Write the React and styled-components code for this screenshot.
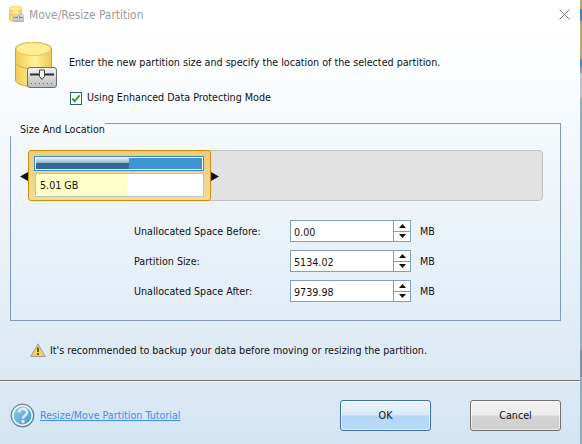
import React from "react";
import styled, { createGlobalStyle } from "styled-components";

const Global = createGlobalStyle`
  html, body { margin: 0; padding: 0; background: #fff; }
  body { font-family: "DejaVu Sans Condensed", "DejaVu Sans", sans-serif; font-stretch: condensed; font-size: 10.65px; color: #111; }
  * { box-sizing: border-box; }
`;
const Win = styled.div`
  width: 582px; height: 444px; display: flex; overflow: hidden;
`;
const Dialog = styled.div`
  width: 580px; height: 444px; display: flex; flex-direction: column;
  background: linear-gradient(#ffffff 0, #ffffff 30px, #d4e5f2 100%);
`;
const Strip = styled.div`
  width: 2px; height: 444px;
  background: linear-gradient(#b8a76e 0, #b8a76e 9px, #3a86c0 9px, #3a86c0 20px, #b8a76e 22px, #b8a76e 58px, #3a86c0 60px, #3a86c0 65px, #8a9aa8 68px, #8a9aa8 73px, #c0c4c8 73px, #c0c4c8 98px, #8fb0c0 98px, #8fb0c0 350px, #8090a8 350px, #8090a8 377px, #8fb0c0 377px);
`;
const TitleBar = styled.div`
  height: 30px; padding: 6px 10px 0 9px; display: flex; align-items: flex-start; gap: 5px;
`;
const Title = styled.div`
  font-size: 11.9px; color: #9a9a9a; line-height: 18px;
`;
const Close = styled.svg`margin-left: auto; margin-top: 3px; margin-right: 0;`;
const Header = styled.div`
  display: flex; padding: 12px 0 0 15px; height: 93px;
`;
const HeaderText = styled.div`
  display: flex; flex-direction: column; padding: 14px 0 0 12px; gap: 21px; line-height: 14px;
`;
const Check = styled.label`display: flex; align-items: center; gap: 5px; line-height: 14px; margin-left: 1px;`;
const Box = styled.span`
  width: 12px; height: 13px; border: 1px solid #2c5f86; background: #fff; display: flex; align-items: center; justify-content: center;
`;
const Group = styled.section`
  margin-left: 10px; width: 551px; height: 198px; border: 1px solid #7f9cb8; position: relative;
`;
const Legend = styled.div`
  position: absolute; left: -1px; top: -1px; width: 95px; height: 13px; padding-left: 10px;
  background: #f6fafd; line-height: 14px; white-space: nowrap;
`;
const Track = styled.div`
  margin: 26px 0 0 17px; width: 515px; height: 51px; background: #e2e2e2; border: 1px solid #c0c0c0; border-radius: 4px;
  position: relative;
`;
const Handle = styled.div`
  position: absolute; left: -1px; top: -1px; width: 183px; height: 51px; border: 1px solid #d18e00; border-radius: 3px;
  background: linear-gradient(#e8cd84, #f3dc98); padding: 5px 6px 0 5px; display: flex; flex-direction: column; gap: 2px;
`;
const Arrow = styled.svg`position: absolute; top: 21px; left: ${p => p.$left}px;`;
const Bar = styled.div`
  height: 15px; border: 1px solid #3b8ac4; box-shadow: inset 0 0 0 1px #fff; background: #3d96d2; padding: 1px;
`;
const BarFill = styled.div`
  height: 100%; width: 93px; background: linear-gradient(#e3ecf2 0, #88aec8 48%, #2d6a97 50%, #2d6a97 100%);
`;
const Size = styled.div`
  height: 24px; border: 1px solid #c2c2c2; background: linear-gradient(90deg, #ffffc8 0, #ffffc8 92px, #fff 92px); margin-left: 1px; padding-left: 4px;
  line-height: 23px;
`;
const Fields = styled.div`
  margin: 19px 0 0 123px; display: flex; flex-direction: column; gap: 8px;
`;
const Row = styled.div`display: flex; align-items: center; height: 22px;`;
const Label = styled.div`width: 156px;`;
const Spin = styled.div`
  width: 121px; height: 22px; border: 1px solid #7f9fbc; background: #fff; display: flex;
`;
const Val = styled.div`flex: 1; padding: 1px 0 0 3px; line-height: 21px;`;
const Btns = styled.div`width: 17px; border-left: 1px solid #7f9fbc; display: flex; flex-direction: column;`;
const Btn = styled.div`
  flex: 1; display: flex; align-items: center; justify-content: center;
  & + & { border-top: 1px solid #7f9fbc; }
`;
const Unit = styled.div`margin-left: 9px;`;
const Warn = styled.div`
  display: flex; align-items: center; gap: 4px; padding: 0 0 1px 30px; height: 59px;
`;
const Sep = styled.div`height: 2px; border-top: 1px solid #6f6f6f; background: #fff;`;
const Footer = styled.div`
  display: flex; align-items: center; padding: 5px 19px 0 10px; flex: 1;
`;
const Link = styled.a`color: #3f8fe8; text-decoration: underline; margin-left: 5px; flex: 1;`;
const Button = styled.button`
  width: 91px; height: 31px; font: inherit; color: #111; border-radius: 3px; padding: 0;
  border: 1px solid ${p => p.$primary ? "#3f6fa8" : "#707070"};
  background: ${p => p.$primary
    ? "linear-gradient(#eef5fd 0, #d9e9f9 49%, #b4d6f6 51%, #b9d9f7 100%)"
    : "linear-gradient(#f3f3f3 0, #ececec 49%, #d4d4d4 51%, #cfcfcf 100%)"};
  box-shadow: inset 0 0 0 1px rgba(255,255,255,.6);
  & + & { margin-left: 39px; }
`;

const Tri = ({ up }) => (
  <svg width="7" height="4" viewBox="0 0 7 4"><path d={up ? "M3.500 0L7 4H0z" : "M3.500 4L7 0H0z"} fill="#111" /></svg>
);
const Spinner = ({ label, value }) => (
  <Row>
    <Label>{label}</Label>
    <Spin>
      <Val>{value}</Val>
      <Btns><Btn><Tri up /></Btn><Btn><Tri /></Btn></Btns>
    </Spin>
    <Unit>MB</Unit>
  </Row>
);
const Disk = ({ w, h, id }) => (
  <svg width={w} height={h} viewBox="0 0 42 46">
    <defs>
      <linearGradient id={id} x1="0" x2="1" y1="0" y2="0">
        <stop offset="0" stopColor="#f2cb55" /><stop offset=".55" stopColor="#fff39a" /><stop offset="1" stopColor="#edc755" />
      </linearGradient>
      <linearGradient id={id + "p"} x1="0" x2="0" y1="0" y2="1">
        <stop offset="0" stopColor="#f2f2f2" /><stop offset="1" stopColor="#bdbdbd" />
      </linearGradient>
    </defs>
    <path d="M.5 7C.5 3 9 .5 18.500.5S36.500 3 36.500 7v31c0 4-9 6.500-18 6.500S.5 42 .5 38z" fill={`url(#${id})`} stroke="#c9a13a" />
    <ellipse cx="18.500" cy="7" rx="17.500" ry="6.500" fill="#ffee96" stroke="#e3c25c" />
    <path d="M.5 21c3 4 11 6 18 6" fill="none" stroke="#cfa944" />
    <rect x="12.500" y="25.500" width="29" height="20" rx="2.500" fill={`url(#${id}p)`} stroke="#6d6d6d" />
    <path d="M15 32.500h24" stroke="#2e2e2e" strokeWidth="2" />
    <path d="M24.500 28h5v6.500l-2.500 3-2.500-3z" fill="#f6f6f6" stroke="#444" />
    <path d="M16 41.500h22" stroke="#666" strokeDasharray="1 3" />
  </svg>
);

export default function App() {
  return (
    <Win>
      <Global />
      <Dialog>
        <TitleBar>
          <Disk w={15} h={16} id="small" />
          <Title>Move/Resize Partition</Title>
          <Close width="11" height="11" viewBox="0 0 11 11"><path d="M.5.500l10 10M10.500.500l-10 10" stroke="#777" fill="none" /></Close>
        </TitleBar>
        <Header>
          <Disk w={42} h={46} id="large" />
          <HeaderText>
            <div>Enter the new partition size and specify the location of the selected partition.</div>
            <Check>
              <Box><svg width="10" height="9" viewBox="0 0 11 9"><path d="M1.500 4.500L4 7.500l5.500-6.500" fill="none" stroke="#2fa32f" strokeWidth="2.200" /></svg></Box>
              Using Enhanced Data Protecting Mode
            </Check>
          </HeaderText>
        </Header>
        <Group>
          <Legend>Size And Location</Legend>
          <Track>
            <Handle>
              <Bar><BarFill /></Bar>
              <Size>5.01 GB</Size>
            </Handle>
            <Arrow $left={-9} width="8" height="9" viewBox="0 0 8 9"><path d="M0 4.500L8 0v9z" fill="#111" /></Arrow>
            <Arrow $left={182} width="8" height="9" viewBox="0 0 8 9"><path d="M8 4.500L0 0v9z" fill="#111" /></Arrow>
          </Track>
          <Fields>
            <Spinner label="Unallocated Space Before:" value="0.00" />
            <Spinner label="Partition Size:" value="5134.02" />
            <Spinner label="Unallocated Space After:" value="9739.98" />
          </Fields>
        </Group>
        <Warn>
          <svg width="16" height="14" viewBox="0 0 16 14"><path d="M8 .8l7.300 12.700H.7z" fill="#f6cf57" stroke="#a0a0a0" /><path d="M8 4.500v4.500M8 10v2" stroke="#333" strokeWidth="1.500" /></svg>
          <span>It's recommended to backup your data before moving or resizing the partition.</span>
        </Warn>
        <Sep />
        <Footer>
          <svg width="25" height="25" viewBox="0 0 25 25">
            <defs>
              <linearGradient id="helpFill" x1="0" x2="1" y1="0" y2="1">
                <stop offset="0" stopColor="#a6d6ef" /><stop offset="1" stopColor="#2e8ec8" />
              </linearGradient>
            </defs>
            <circle cx="12.500" cy="12.500" r="11.500" fill="url(#helpFill)" stroke="#777" />
            <circle cx="12.500" cy="12.500" r="9.700" fill="none" stroke="#f2f7fa" strokeWidth="1.500" />
            <path d="M9 9.500c0-5 8-5 8 0 0 3-4 3-4 6" fill="none" stroke="#e3eef5" strokeWidth="2.500" />
            <rect x="11.500" y="17" width="3" height="3" fill="#e3eef5" />
          </svg>
          <Link>Resize/Move Partition Tutorial</Link>
          <Button $primary>OK</Button>
          <Button>Cancel</Button>
        </Footer>
      </Dialog>
      <Strip />
    </Win>
  );
}
